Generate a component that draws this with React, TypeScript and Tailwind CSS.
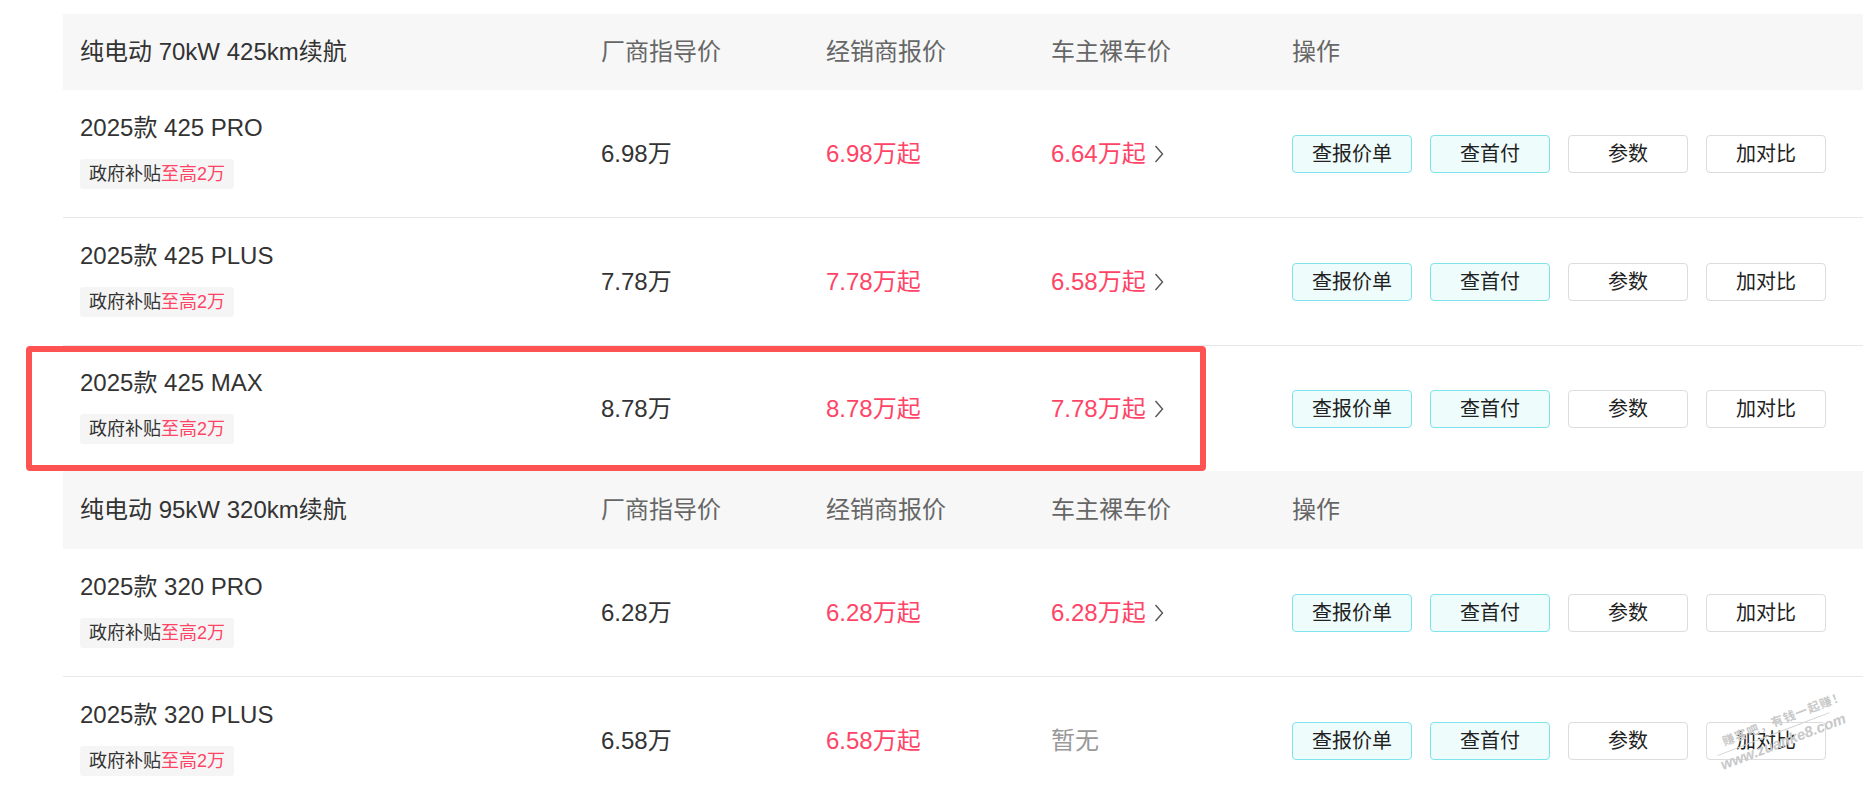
import React from 'react';

type Trim = { name: string; guide: string; dealer: string; owner: string | null };

const groups: { title: string; trims: Trim[] }[] = [
  {
    title: '纯电动 70kW 425km续航',
    trims: [
      { name: '2025款 425 PRO', guide: '6.98万', dealer: '6.98万起', owner: '6.64万起' },
      { name: '2025款 425 PLUS', guide: '7.78万', dealer: '7.78万起', owner: '6.58万起' },
      { name: '2025款 425 MAX', guide: '8.78万', dealer: '8.78万起', owner: '7.78万起' },
    ],
  },
  {
    title: '纯电动 95kW 320km续航',
    trims: [
      { name: '2025款 320 PRO', guide: '6.28万', dealer: '6.28万起', owner: '6.28万起' },
      { name: '2025款 320 PLUS', guide: '6.58万', dealer: '6.58万起', owner: null },
    ],
  },
];

const cols = 'grid grid-cols-[538px_225px_225px_241px_1fr] items-center';

function Chevron() {
  return (
    <svg width="10" height="20" viewBox="0 0 10 20" className="ml-[8px]">
      <polyline points="1.5,2 8.5,10 1.5,18" fill="none" stroke="#555" strokeWidth="1.4" />
    </svg>
  );
}

function Row({ t, last }: { t: Trim; last: boolean }) {
  return (
    <div className={`${cols} ${last ? 'h-[125px]' : 'h-[128px] border-b border-[#e8e8e8]'}`}>
      <div className="pl-[17px] pb-[5px] flex flex-col items-start gap-[16px]">
        <div className="text-[24px] leading-[30px] text-[#333]">{t.name}</div>
        <div className="h-[30px] px-[9px] rounded-[3px] bg-[#f5f5f5] text-[18px] leading-[30px] text-[#333]">
          政府补贴<span className="text-[#ff4466]">至高2万</span>
        </div>
      </div>
      <div className="text-[24px] text-[#333]">{t.guide}</div>
      <div className="text-[24px] text-[#ff4466]">{t.dealer}</div>
      <div className="text-[24px]">
        {t.owner ? (
          <span className="flex items-center text-[#ff4466]">
            {t.owner}
            <Chevron />
          </span>
        ) : (
          <span className="text-[#999]">暂无</span>
        )}
      </div>
      <div className="flex gap-[18px] text-[20px] text-[#222]">
        <button className="w-[120px] h-[38px] rounded-[4px] border border-[#7ee3ea] bg-[#effcfc]">查报价单</button>
        <button className="w-[120px] h-[38px] rounded-[4px] border border-[#7ee3ea] bg-[#effcfc]">查首付</button>
        <button className="w-[120px] h-[38px] rounded-[4px] border border-[#dcdcdc] bg-white">参数</button>
        <button className="w-[120px] h-[38px] rounded-[4px] border border-[#dcdcdc] bg-white">加对比</button>
      </div>
    </div>
  );
}

export default function App() {
  return (
    <div
      className="relative w-[1863px] h-[801px] overflow-hidden bg-white pt-[14px] pl-[63px]"
      style={{ fontFamily: '"Liberation Sans", "Noto Sans CJK SC", sans-serif' }}
    >
      {groups.map((g, gi) => (
        <div key={gi}>
          <div className={`${cols} ${gi === 0 ? 'h-[76px]' : 'h-[78px]'} bg-[#f7f7f7] text-[24px] text-[#666]`}>
            <div className="pl-[17px] text-[#333]">{g.title}</div>
            <div>厂商指导价</div>
            <div>经销商报价</div>
            <div>车主裸车价</div>
            <div>操作</div>
          </div>
          {g.trims.map((t, i) => (
            <Row key={i} t={t} last={gi === 0 && i === g.trims.length - 1} />
          ))}
        </div>
      ))}

      {/* annotation box */}
      <div className="absolute left-[26px] top-[346px] w-[1180px] h-[125px] border-[6px] border-[#ff5252] rounded-[4px]" />

      {/* watermark */}
      <div className="absolute left-[1718px] top-[738px] -rotate-[21deg] origin-left whitespace-nowrap text-[#c8c8c8] font-bold select-none">
        <div className="text-[12px] leading-[15px] pl-[10px] tracking-[1px]">赚客吧，有钱一起赚！</div>
        <div className="border-t border-[#d4d4d4] mt-[2px] w-[120px]" />
        <div className="text-[15px] leading-[20px] italic">www.zuanke8.com</div>
      </div>
    </div>
  );
}
